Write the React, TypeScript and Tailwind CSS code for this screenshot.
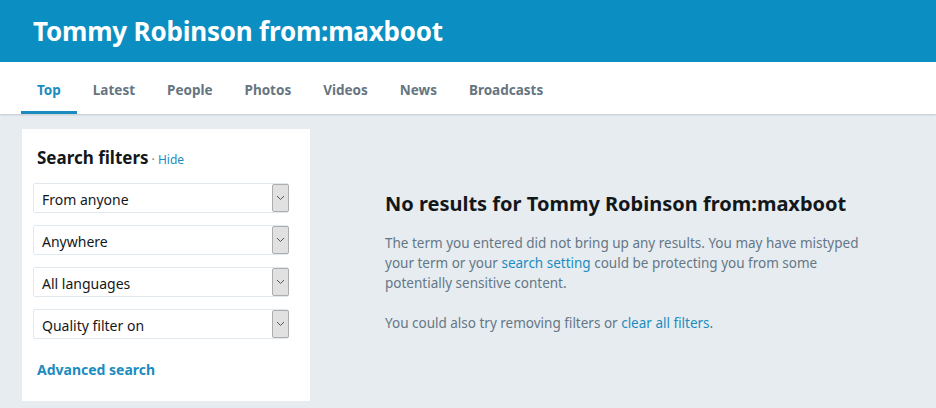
import React from 'react';

const tabs = ['Top', 'Latest', 'People', 'Photos', 'Videos', 'News', 'Broadcasts'];
const filters = ['From anyone', 'Anywhere', 'All languages', 'Quality filter on'];

function Chevron() {
    return (
        <svg width="9" height="6" viewBox="0 0 9 6" fill="none">
            <path d="M1 1l3.5 3.5L8 1" stroke="#555" strokeWidth="1" />
        </svg>
    );
}

export default function App() {
    return (
        <div
            className="w-[936px] h-[408px] overflow-hidden bg-[#e6ecf0]"
            style={{ fontFamily: '"Noto Sans", "Open Sans", sans-serif' }}
        >
            {/* Header */}
            <div className="h-[62px] bg-[#0b8fc3] flex items-center px-[33px]">
                <h1 className="text-[26px] font-bold text-white leading-none tracking-[-0.2px]">
                    Tommy Robinson from:maxboot
                </h1>
            </div>

            {/* Tabs */}
            <div className="h-[52px] bg-white flex pl-[21px] shadow-[0_1px_2px_rgba(0,0,0,0.15)] relative">
                {tabs.map((t, i) => (
                    <div
                        key={t}
                        className={
                            'h-full flex items-center px-[16px] text-[13.5px] font-bold ' +
                            (i === 0
                                ? 'text-[#1b8cc0] border-b-[3px] border-[#1b8cc0] pt-[8px] pl-[16px]'
                                : 'text-[#66757f] pt-[5px]')
                        }
                    >
                        {t}
                    </div>
                ))}
            </div>

            <div className="flex pt-[15px] pl-[22px]">
                {/* Filters panel */}
                <div className="w-[288px] h-[272px] bg-white px-[11px] pt-[16px]">
                    <div className="flex items-baseline pl-[4px] mb-[12px]">
                        <span className="text-[17px] font-bold text-[#14171a]">Search filters</span>
                        <span className="text-[12px] text-[#1b8cc0] ml-[3px]">
                            <span className="text-[#657786]">·</span> Hide
                        </span>
                    </div>
                    <div className="flex flex-col gap-[12px] w-[256px]">
                        {filters.map((f) => (
                            <div
                                key={f}
                                className="h-[30px] flex items-center border border-[#e1e8ed] rounded-[2px] bg-white"
                            >
                                <span className="flex-1 pl-[8px] pt-[3px] text-[14px] text-[#14171a]">{f}</span>
                                <span className="w-[17px] h-[28px] flex items-center justify-center bg-[#e1e1e1] border border-[#adadad] rounded-[2px] mr-[-1px]">
                                    <Chevron />
                                </span>
                            </div>
                        ))}
                    </div>
                    <div className="mt-[20px] pl-[4px] text-[14px] font-bold text-[#1b8cc0]">Advanced search</div>
                </div>

                {/* Results */}
                <div className="pl-[75px] pt-[60px] w-[600px]">
                    <h2 className="text-[20px] font-bold text-[#14171a] leading-[30px]">
                        No results for Tommy Robinson from:maxboot
                    </h2>
                    <p className="mt-[14px] text-[13.5px] leading-[20px] text-[#657786] whitespace-nowrap">
                        The term you entered did not bring up any results. You may have mistyped
                        <br />
                        your term or your <span className="text-[#1b8cc0]">search setting</span> could be protecting
                        you from some
                        <br />
                        potentially sensitive content.
                    </p>
                    <p className="mt-[20px] text-[13.5px] leading-[20px] text-[#657786]">
                        You could also try removing filters or <span className="text-[#1b8cc0]">clear all filters</span>.
                    </p>
                </div>
            </div>
        </div>
    );
}
